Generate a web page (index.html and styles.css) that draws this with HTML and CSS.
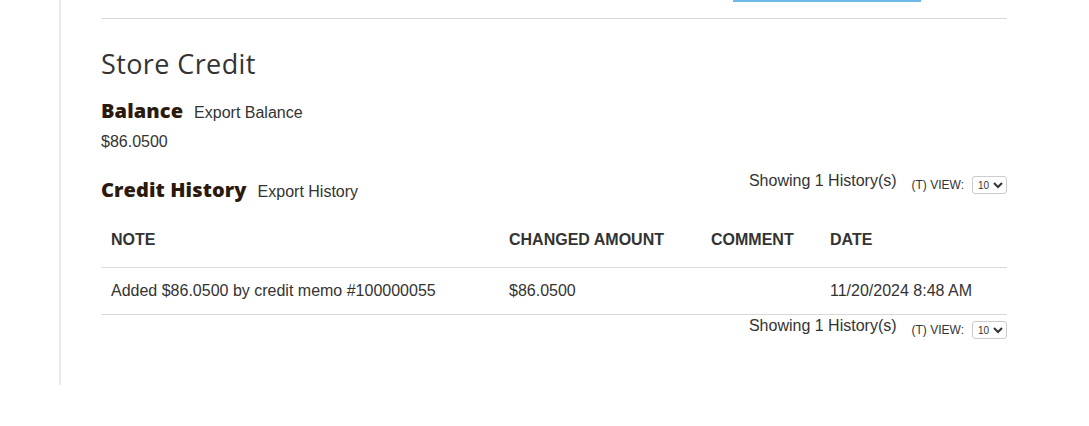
FILE: index.html
```html
<!DOCTYPE html>
<html lang="en">
<head>
    <meta charset="UTF-8">
    <meta name="viewport" content="width=device-width, initial-scale=1.0">
    <title>Store Credit</title>
    <link rel="stylesheet" href="styles.css">
</head>
<body>
    <div class="page">
        <div class="side"></div>
        <div class="main">
            <div class="prev-row">
                <span class="prev-bar"></span>
            </div>

            <h1 class="title">Store Credit</h1>

            <div class="block-head">
                <h2>Balance</h2>
                <a href="#">Export Balance</a>
            </div>
            <p class="amount">$86.0500</p>

            <div class="history-head">
                <div class="block-head">
                    <h2>Credit History</h2>
                    <a href="#">Export History</a>
                </div>
                <div class="pager">
                    <span class="count">Showing 1 History(s)</span>
                    <label>(T) VIEW:</label>
                    <select><option>10</option></select>
                </div>
            </div>

            <table class="history">
                <colgroup>
                    <col style="width: 398px">
                    <col style="width: 202px">
                    <col style="width: 119px">
                    <col>
                </colgroup>
                <thead>
                    <tr>
                        <th>NOTE</th>
                        <th>CHANGED AMOUNT</th>
                        <th>COMMENT</th>
                        <th>DATE</th>
                    </tr>
                </thead>
                <tbody>
                    <tr>
                        <td>Added $86.0500 by credit memo #100000055</td>
                        <td>$86.0500</td>
                        <td></td>
                        <td>11/20/2024 8:48 AM</td>
                    </tr>
                </tbody>
            </table>

            <div class="pager pager-bottom">
                <span class="count">Showing 1 History(s)</span>
                <label>(T) VIEW:</label>
                <select><option>10</option></select>
            </div>
        </div>
    </div>
</body>
</html>
```

FILE: styles.css
```css
body {
    margin: 0;
    font-family: 'Liberation Sans', Arial, sans-serif;
    color: #333;
    background: #fff;
}

.page {
    display: flex;
    align-items: flex-start;
}

.side {
    width: 59px;
    flex-shrink: 0;
}

.main {
    border-left: 2px solid #ebebeb;
    padding: 0 82px 44px 40px;
    width: 906px;
}

.prev-row {
    height: 18px;
    border-bottom: 1px solid #d9d9d9;
    padding-left: 632px;
}

.prev-bar {
    display: block;
    width: 188px;
    height: 2px;
    background: #6cb9e8;
}

.title {
    margin: 27px 0 0;
    font-family: 'Open Sans', sans-serif;
    font-weight: 400;
    font-size: 27px;
    letter-spacing: 0.4px;
    line-height: 36px;
    color: #333;
}

.block-head {
    display: flex;
    align-items: baseline;
    gap: 11px;
}

.block-head h2 {
    margin: 0;
    font-family: 'Open Sans', sans-serif;
    font-weight: 800;
    font-size: 20px;
    letter-spacing: 0.1px;
    line-height: 28px;
    color: #2b1a0c;
}

.block-head a {
    color: #333;
    text-decoration: none;
    font-size: 16px;
}

.title + .block-head {
    margin-top: 15px;
}

.amount {
    margin: 6px 0 0;
    font-size: 16px;
    line-height: 22px;
}

.history-head {
    display: flex;
    justify-content: space-between;
    align-items: flex-start;
    margin-top: 14px;
}

.history-head .block-head {
    margin-top: 9px;
}

.pager {
    display: flex;
    align-items: center;
    justify-content: flex-end;
    height: 22px;
    margin-top: 7px;
}

.pager .count {
    font-size: 16px;
    margin-right: 15px;
    margin-top: -8px;
}

.pager label {
    font-size: 12px;
    margin-right: 8px;
}

.pager select {
    font-family: 'Liberation Sans', Arial, sans-serif;
    font-size: 10px;
    height: 18px;
    width: 35px;
    padding: 0 1px;
    border: 1px solid #ccc;
    border-radius: 3px;
    background: #fff;
    color: #333;
}

.history {
    width: 100%;
    border-collapse: collapse;
    table-layout: fixed;
    margin-top: 12px;
}

.history th {
    text-align: left;
    font-size: 16px;
    font-weight: 700;
    padding: 15px 10px 18px;
    line-height: 18px;
    border-bottom: 1px solid #d9d9d9;
}

.history td {
    font-size: 16px;
    padding: 14px 10px 14px;
    line-height: 18px;
    border-bottom: 1px solid #d9d9d9;
}

.pager-bottom {
    margin-top: 4px;
}
```
